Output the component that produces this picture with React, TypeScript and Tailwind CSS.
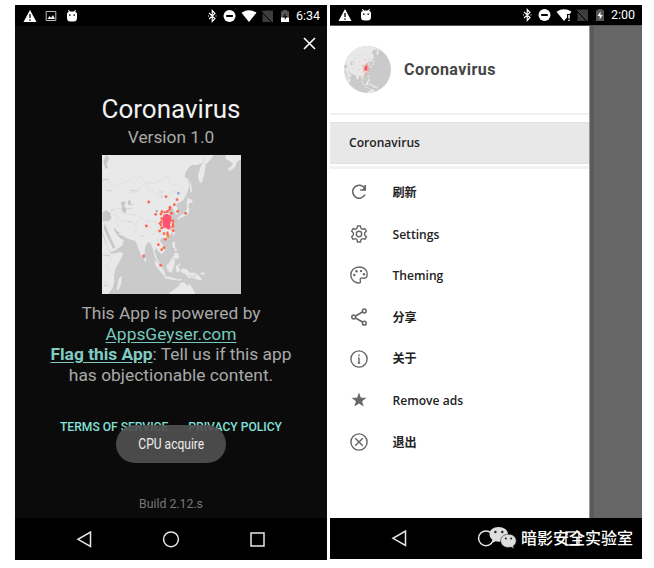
import React from "react";

const landDots: [number, number][] = [
  [212, 334], [160, 350], [245, 343], [237, 358], [224, 366], [247, 378], [271, 384], [181, 387],
  [197, 386], [229, 384], [200, 379], [215, 379], [194, 414], [153, 422], [193, 437], [206, 445],
  [234, 436], [217, 448], [210, 462], [189, 478], [206, 487], [199, 493], [145, 512], [196, 540],
  [201, 400], [233, 408], [233, 421], [199, 428], [223, 372],
];

function VirusMap({ className }: { className: string }) {
  return (
    <svg viewBox="20 209 417 417" className={className} preserveAspectRatio="none">
      <rect x="20" y="209" width="417" height="417" fill="#cacaca" />
      <path
        fill="#e9e9e9"
        d="M20 209H330L322 232L305 240L292 238L284 243L271 259L268 275L279 282L281 302L276 322L264 345L249 353L242 358L247 371L249 384L242 389L237 378L231 367L222 368L216 376L226 383L222 391L230 405L236 420L234 435L222 451L208 458L198 459L194 466L206 483L209 496L199 507L189 498L181 487L178 500L185 519L194 535L188 532L177 513L172 489L165 472L158 470L150 483L147 512L140 516L132 496L124 475L119 466L108 463L94 459L85 452L73 450L64 443L60 434L67 448L76 459L86 466L80 481L65 492L48 501L40 491L31 467L22 440V450L38 488L47 506L71 501L84 502L76 523L61 548L56 570L57 588L52 608L39 626H20Z"
      />
      <path
        fill="#e9e9e9"
        d="M330 209H355L344 224L331 238L327 267L319 292L312 291L308 270L315 245L326 227ZM390 209H437V222L424 230L420 244L405 256L397 253L414 235L403 227L391 221ZM283 282L288 301L290 320L286 322L283 305ZM277 337L289 343L293 352L282 352L279 361L283 372L279 387L268 393L255 398L250 404L247 398L256 389L268 384L275 369L274 350ZM233 437L239 438L236 451L232 447ZM231 470L239 470L239 484L246 493L242 498L232 488ZM241 500L250 507L252 518L240 521L232 515ZM177 525L187 532L204 552L211 568L206 572L193 556L180 539ZM213 542L232 516L240 526L235 546L229 562L218 558ZM206 573L224 574L245 582L259 581L257 586L233 583L209 579ZM242 541L258 534L249 545L256 555L246 562L241 553ZM260 549L274 552L283 562L299 562L310 570L322 585L307 583L291 577L278 578L271 567L257 560ZM318 561L329 563L325 568L315 567ZM220 626L239 610L249 603L254 594L266 590L276 601L283 596L292 610L301 626ZM70 580L80 571L77 597L69 615L64 611ZM147 516L153 520L152 530L147 527Z"
      />
      <path
        fill="#c8c8c8"
        d="M22 382L32 375L45 382L48 400L39 408L22 407ZM76 352L83 347L92 352L87 359L94 376L88 385L78 374L80 364ZM97 346L105 344L107 356L98 360ZM57 425L63 434L73 448L83 452L86 456L75 460L67 449L57 435ZM28 414L39 440L53 472L60 486L54 491L42 468L25 430ZM31 209L42 218L34 236L38 248L30 250L24 231Z"
      />
      <g fill="none" stroke="#d1d1d1" strokeWidth="1.2">
        <path d="M20 290L35 283L47 297L67 304L73 297L92 291L108 281L121 269L137 275L150 292L172 294L199 286L205 273L218 275L219 290L233 299L250 296L270 317M150 292L136 306L124 322L106 320L93 333M150 292L157 314L173 319L195 335L213 333L232 315L246 318" />
        <path d="M48 371L76 370M49 386L65 391L79 409L101 408L119 418L126 432L112 447M66 395L61 411L74 426M93 386L109 390L124 386L136 398L123 414M136 398L154 405L168 409L180 407L182 423L189 432L180 443L169 452M157 408L159 424L170 429M22 510L36 505L48 523L36 541L50 567M20 550L36 541M20 470L36 469M20 588L40 594M190 450L184 466L191 475M224 525L219 540M299 562V577" />
      </g>
      <g fill="none" stroke="#b9b9b9" strokeWidth="1.6">
        <path d="M105 316H126M190 320H204M99 357H116M35 316H51M22 282H40M61 441H76M23 511H46M82 370H109M181 376H188M198 328V334M136 451H147M228 489H244M276 572H302M99 409H108M25 600H40M45 374H57M189 566H198" />
      </g>
      <path fill="#ff5572" d="M204 389L215 385L227 391L229 402L224 419L227 427L219 433L212 428L203 426L201 408Z" />
      <path stroke="#ff5938" strokeWidth="6" strokeDasharray="6 4" fill="none" d="M205 382L218 378L229 385M232 403L233 423L226 433M199 396L196 419L203 430M216 439L218 454M224 362V371" />
      {landDots.map(([x, y]) => (
        <circle key={`${x}-${y}`} cx={x} cy={y} r="4.2" fill="#f96850" />
      ))}
      <circle cx="249" cy="324" r="4" fill="#929de8" />
      <circle cx="184" cy="378" r="3" fill="#9a9fae" />
      <circle cx="219" cy="454" r="4" fill="#f3a12f" />
    </svg>
  );
}

const Warning = () => (
  <svg width="14" height="14" viewBox="0 0 14 14">
    <path d="M7 1L13.5 13H.5Z" fill="#fff" />
    <path d="M7 5v4M7 10.2v1.5" stroke="#000" strokeWidth="1.3" />
  </svg>
);

const Robot = () => (
  <svg width="12" height="14" viewBox="0 0 12 14">
    <path d="M1 4.7Q1 2.9 3 2.9L1.9 1.5l.7-.5 1.6 1.6h3.6L9.4 1l.7.5L9 2.9q2 0 2 1.8V9q0 3.5-3.5 3.5h-3Q1 12.5 1 9Z" fill="#fff" />
    <path d="M3 6.2h1.6M7.4 6.2H9" stroke="#000" strokeWidth="1.3" />
  </svg>
);

const Bluetooth = () => (
  <svg width="10" height="14" viewBox="0 0 10 14" fill="none" stroke="#fff" strokeWidth="1.1">
    <path d="M2 4L8 9.500 5.200 12.500v-11L8 4.500 2 10M1 7h1M8.500 7h1" />
  </svg>
);

const Disturb = () => (
  <svg width="13" height="14" viewBox="0 0 13 14">
    <circle cx="6.5" cy="7" r="6" fill="#fff" />
    <path d="M3.200 7h6.600" stroke="#000" strokeWidth="2" />
  </svg>
);

const Wifi = ({ alert = false }: { alert?: boolean }) => (
  <svg width="16" height="14" viewBox="0 0 16 14">
    <path d="M.5 3.700Q8-1.200 15.500 3.700L8 13Z" fill="#fff" />
    {alert && <path d="M11 14V6h5v8Z" fill="#000" />}
    {alert && <path d="M13 7v3.500M13 11.700v1.300" stroke="#fff" strokeWidth="1.500" />}
  </svg>
);

const NoSim = () => (
  <svg width="13" height="14" viewBox="0 0 13 14">
    <path d="M4.500 1.500H12V13L1.500 2.500M1.500 4v9H10Z" fill="#3c3c3c" />
    <path d="M.8 1.500L12 13" stroke="#555" strokeWidth="1" />
  </svg>
);

const Battery = ({ charging = false }: { charging?: boolean }) => (
  <svg width="10" height="14" viewBox="0 0 10 14">
    <path d="M1 2.300h2V1h4v1.300h2V13H1Z" fill="#555" />
    {charging ? (
      <path d="M5.500 3.500L2.500 8h2.200v3.500L7.700 7H5.500Z" fill="#fff" />
    ) : (
      <>
        <path d="M1 8.500h8V13H1Z" fill="#fff" />
        <path d="M5.500 4L2.800 8.300h2V11L7.400 7H5.500Z" fill="#111" />
      </>
    )}
  </svg>
);

function NavIcons() {
  return (
    <svg width="312" height="42" viewBox="0 0 312 42" fill="none" stroke="#e7e7e7" strokeWidth="1.500">
      <path d="M75.500 14V28.500L63 21.300Z" />
      <circle cx="156" cy="21.300" r="7.400" />
      <rect x="236" y="15" width="13" height="13" />
    </svg>
  );
}

const Gear = () => (
  <svg width="18" height="18" viewBox="0 0 18 18" fill="none" stroke="#686868" strokeWidth="1.4" strokeLinejoin="round">
    <path d="M7.500 1h3l.5 2.400 1.600.9 2.300-.8 1.500 2.600L14.600 8v2l1.800 1.800-1.500 2.600-2.300-.8-1.600.9-.5 2.500h-3L7 14.500l-1.600-.9-2.300.8-1.500-2.600L3.400 10V8L1.600 6.100l1.500-2.600 2.300.8L7 3.400Z" />
    <circle cx="9" cy="9" r="2.700" />
  </svg>
);

const icons: Record<string, React.ReactNode> = {
  refresh: (
    <svg width="18" height="18" viewBox="0 0 18 18" fill="none" stroke="#656565" strokeWidth="1.600">
      <path d="M14.700 5.200A6.500 6.500 0 1 0 15 11.700M15.200 2v5h-5" />
      <path d="M12.500 6.500h3V3.600Z" fill="#656565" strokeWidth=".5" />
    </svg>
  ),
  settings: <Gear />,
  theming: (
    <svg width="18" height="18" viewBox="0 0 18 18" fill="none" stroke="#656565" strokeWidth="1.400">
      <path d="M9.300 17C4.500 17 .8 13.500.8 9S4.400 1 9.200 1C14 1 17.200 4.200 17.200 8.200c0 3.200-2 4.300-4 3.900-2.300-.5-3.500.2-2.900 2.400.5 1.600.1 2.500-1 2.500Z" />
      <g fill="#656565" stroke="none">
        <circle cx="4.300" cy="9" r="1.200" /><circle cx="6.500" cy="5.300" r="1.200" /><circle cx="11" cy="5.100" r="1.200" /><circle cx="14" cy="8.300" r="1.200" />
      </g>
    </svg>
  ),
  share: (
    <svg width="18" height="18" viewBox="0 0 18 18" fill="none" stroke="#656565" strokeWidth="1.500">
      <circle cx="3.700" cy="9" r="1.900" /><circle cx="14.300" cy="3" r="1.900" /><circle cx="14.300" cy="15.200" r="1.900" />
      <path d="M5.500 8l7-4M5.500 10l7 4" />
    </svg>
  ),
  about: (
    <svg width="18" height="18" viewBox="0 0 18 18" fill="none" stroke="#656565" strokeWidth="1.400">
      <circle cx="9" cy="9" r="8.100" />
      <path d="M9 4.500v1.700M9 7.800v5.500M8 8H9M7.800 13h2.400" />
    </svg>
  ),
  star: (
    <svg width="18" height="18" viewBox="0 0 18 18" fill="#686868">
      <path d="M9 1.500l1.900 5.200 5.600.1-4.400 3.400 1.600 5.300L9 12.400l-4.700 3.100 1.600-5.300L1.500 6.800l5.600-.1Z" />
    </svg>
  ),
  exit: (
    <svg width="18" height="18" viewBox="0 0 18 18" fill="none" stroke="#656565" strokeWidth="1.400">
      <circle cx="9" cy="9" r="8.100" />
      <path d="M5.200 5.200l7.600 7.600M12.800 5.200l-7.600 7.600" />
    </svg>
  ),
};

const menu = [
  ["refresh", "刷新"],
  ["settings", "Settings"],
  ["theming", "Theming"],
  ["share", "分享"],
  ["about", "关于"],
  ["star", "Remove ads"],
  ["exit", "退出"],
];

const WeChat = () => (
  <svg width="28" height="24" viewBox="0 0 28 24">
    <path fill="#dedede" d="M9.500 1C4.200 1 .5 4 .5 8.200c0 2.400 1.300 4.500 3.500 5.800l-.8 3 3.400-1.700c1 .3 2 .4 3.400.4 5 0 9-3.300 9-7.500S14.800 1 9.500 1Z" />
    <path fill="#dedede" stroke="#252525" strokeWidth=".6" d="M19.300 8.200c-4.600 0-7.600 2.900-7.600 6.600 0 3.800 3.200 6.700 7.600 6.700 1 0 1.900-.2 2.800-.4l2.800 1.600-.7-2.600c1.900-1.300 3-3 3-5.300 0-3.700-3.300-6.600-7.900-6.600Z" />
    <g fill="#222"><circle cx="6.400" cy="6" r="1.200" /><circle cx="13.300" cy="6" r="1.200" /><circle cx="16.800" cy="12.600" r="1" /><circle cx="22.200" cy="12.600" r="1" /></g>
  </svg>
);

export default function App() {
  return (
    <div className="flex h-[568px] w-[654px] items-start gap-[3px] overflow-hidden bg-white pt-[5px] pl-[15px] font-[Roboto,sans-serif]">
      <section className="flex h-[555px] w-[312px] flex-col bg-[#0b0b0b]">
        <header className="flex h-[21px] shrink-0 items-center bg-black pr-[7px] pl-[8px] text-white">
          <Warning />
          <svg className="ml-[8px]" width="12" height="14" viewBox="0 0 12 14">
            <path d="M1.200 2.500h9.600v9H1.200Z" fill="none" stroke="#bbb" />
            <path d="M2.500 10l2-3 1.600 1.700L8 6l2 4Z" fill="#eee" />
          </svg>
          <span className="ml-[9px]"><Robot /></span>
          <div className="ml-auto flex items-center">
            <Bluetooth />
            <span className="ml-[6px]"><Disturb /></span>
            <span className="ml-[5px]"><Wifi /></span>
            <span className="ml-[4px]"><NoSim /></span>
            <span className="ml-[6px]"><Battery /></span>
            <span className="ml-[6px] w-[24px] text-[12.5px] leading-[20px] whitespace-nowrap">6:34</span>
          </div>
        </header>
        <div className="flex h-[63px] shrink-0 justify-end pt-[11px] pr-[11px]">
          <svg width="13" height="13" viewBox="0 0 13 13" stroke="#fff" strokeWidth="1.600"><path d="M1 1l11 11M12 1L1 12" /></svg>
        </div>
        <h1 className="h-[38px] shrink-0 text-center text-[26px] leading-[40px] whitespace-nowrap text-[#f1f1f1]">Coronavirus</h1>
        <p className="h-[27.5px] shrink-0 text-center text-[17.3px] leading-[21px] text-[#a9a9a9]">Version 1.0</p>
        <VirusMap className="ml-[86.5px] h-[139px] w-[139px] shrink-0" />
        <div className="mt-[9.5px] h-[84px] shrink-0 text-center text-[17.4px] leading-[20.5px] whitespace-nowrap text-[#a9a9a9]">
          <p>This App is powered by</p>
          <p><a className="text-[#78c8bf] underline underline-offset-2">AppsGeyser.com</a></p>
          <p><a className="font-bold text-[#80cbc4] underline underline-offset-2">Flag this App</a>: Tell us if this app</p>
          <p>has objectionable content.</p>
        </div>
        <div className="relative mt-[30px] h-[50px] shrink-0">
          <div className="flex justify-center gap-[20px] text-[12.1px] leading-[20px] font-medium whitespace-nowrap text-[#84e0d8]">
            <span>TERMS OF SERVICE</span><span>PRIVACY POLICY</span>
          </div>
          <div className="absolute top-[8px] left-[101px] flex h-[38px] w-[110px] items-center justify-center rounded-full bg-[#505050]/92 text-[#eee]">
            <span className="scale-x-[.86] text-[14px] whitespace-nowrap">CPU acquire</span>
          </div>
        </div>
        <p className="mt-[27px] h-[20px] shrink-0 text-center text-[12.3px] leading-[20px] text-[#777]">Build 2.12.s</p>
        <footer className="mt-auto h-[42px] shrink-0 bg-black"><NavIcons /></footer>
      </section>

      <section className="flex h-[554px] w-[312px] flex-col bg-[#666]">
        <header className="flex h-[21px] shrink-0 items-center border-b border-[#555] bg-black pr-[7px] pl-[8px] text-white">
          <Warning />
          <span className="ml-[8px]"><Robot /></span>
          <div className="ml-auto flex items-center">
            <Bluetooth />
            <span className="ml-[6px]"><Disturb /></span>
            <span className="ml-[5px]"><Wifi alert /></span>
            <span className="ml-[4px]"><NoSim /></span>
            <span className="ml-[6px]"><Battery charging /></span>
            <span className="ml-[6px] w-[24px] text-[12.5px] leading-[20px] whitespace-nowrap">2:00</span>
          </div>
        </header>
        <main className="h-[492px] w-[264px] shrink-0 border-r-4 border-[#5b5b5b] bg-white">
          <div className="h-full w-[260px] border-r border-[#999]">
            <div className="flex h-[87px] items-center pl-[14px]">
              <VirusMap className="h-[47px] w-[47px] rounded-full" />
              <h2 className="ml-[13px] text-[16px] font-bold tracking-[.45px] whitespace-nowrap text-[#444]">Coronavirus</h2>
            </div>
            <div className="h-[2px] bg-[#f1f1f1]" />
            <div className="mt-[7px] flex h-[42px] items-center border-y border-[#e1e1e1] bg-[#e8e8e8] pl-[19px] font-['Open_Sans',sans-serif] text-[12.1px] font-semibold text-[#222]"><span className="pt-px">Coronavirus</span></div>
            <div className="mt-[2px] h-[3px] bg-[#f2f2f2]" />
            <nav className="mt-[2.5px] font-['Open_Sans','Noto_Sans_CJK_SC',sans-serif] text-[12.1px] font-semibold text-[#222]">
              {menu.map(([icon, label]) => (
                <div key={icon} className="flex h-[41.6px] items-center pl-[20px]">
                  {icons[icon]}
                  <span className="ml-[24.5px] pt-[1.5px] whitespace-nowrap">{label}</span>
                </div>
              ))}
            </nav>
          </div>
        </main>
        <footer className="relative h-[41px] shrink-0 bg-black">
          <div className="-translate-y-px"><NavIcons /></div>
          <div className="absolute top-[8px] left-[158.5px] flex items-center">
            <WeChat />
            <span className="ml-[4.5px] -translate-y-px font-['Noto_Sans_CJK_SC',sans-serif] text-[16px] leading-[24px] font-medium whitespace-nowrap text-white">暗影安全实验室</span>
          </div>
        </footer>
      </section>
    </div>
  );
}
